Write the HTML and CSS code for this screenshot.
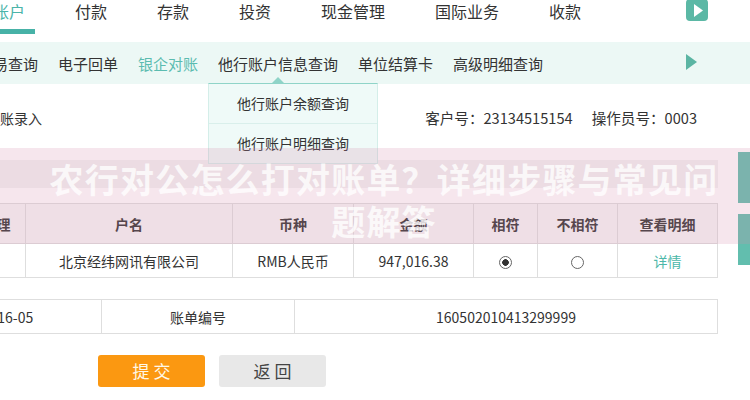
FILE: index.html
```html
<!DOCTYPE html>
<html lang="zh-CN">
<head>
<meta charset="utf-8">
<title>银企对账</title>
<link rel="stylesheet" href="styles.css">
</head>
<body>
<div class="screen">
  <header class="topnav">
    <ul class="main-menu">
      <li class="active">账户</li>
      <li>付款</li>
      <li>存款</li>
      <li>投资</li>
      <li>现金管理</li>
      <li>国际业务</li>
      <li>收款</li>
    </ul>
    <span class="play-btn"><svg width="9" height="13" viewBox="0 0 9 13"><polygon points="0,0 9,6.5 0,13" fill="#fff"/></svg></span>
  </header>

  <nav class="subnav">
    <ul class="sub-menu">
      <li>交易查询</li>
      <li>电子回单</li>
      <li class="current">银企对账</li>
      <li>他行账户信息查询</li>
      <li>单位结算卡</li>
      <li>高级明细查询</li>
    </ul>
    <span class="sub-arrow"></span>
  </nav>

  <div class="dropdown">
    <div class="dd-item">他行账户余额查询</div>
    <div class="dd-item">他行账户明细查询</div>
  </div>

  <section class="info">
    <span class="crumb">对账录入</span>
    <div class="meta-group">
      <span>客户号：23134515154</span>
      <span>操作员号：0003</span>
    </div>
  </section>

  <div class="bar"></div>

  <table class="recon">
    <colgroup>
      <col class="c1"><col class="c2"><col class="c3"><col class="c4"><col class="c5"><col class="c6"><col class="c7">
    </colgroup>
    <thead>
      <tr><th>处理</th><th>户名</th><th>币种</th><th>金额</th><th>相符</th><th>不相符</th><th>查看明细</th></tr>
    </thead>
    <tbody>
      <tr>
        <td></td>
        <td>北京经纬网讯有限公司</td>
        <td>RMB人民币</td>
        <td>947,016.38</td>
        <td><span class="radio checked"></span></td>
        <td><span class="radio"></span></td>
        <td><span class="link">详情</span></td>
      </tr>
    </tbody>
  </table>

  <table class="bill">
    <colgroup><col class="b1"><col class="b2"><col class="b3"></colgroup>
    <tr><td>2016-05</td><td>账单编号</td><td>160502010413299999</td></tr>
  </table>

  <div class="actions">
    <button class="btn submit">提 交</button>
    <button class="btn back">返 回</button>
  </div>

  <div class="side-tabs">
    <span class="tab"></span>
    <span class="tab"></span>
  </div>

  <div class="overlay">
    <h1 class="title">农行对公怎么打对账单？详细步骤与常见问题解答</h1>
  </div>
</div>
</body>
</html>
```
FILE: styles.css
```css
html, body {
  margin: 0;
  padding: 0;
  background: #fff;
}
body {
  width: 750px;
  height: 400px;
  overflow: hidden;
  font-family: "Noto Sans CJK SC", "Noto Sans", sans-serif;
  color: #333;
}
.screen {
  position: relative;
  width: 750px;
  height: 400px;
  overflow: hidden;
}

/* top navigation */
.topnav {
  display: flex;
  align-items: flex-start;
  height: 42px;
  background: #fff;
}
.main-menu {
  display: flex;
  gap: 50px;
  list-style: none;
  margin: 0 0 0 -7px;
  padding: 0;
  font-size: 16px;
  line-height: 22px;
  color: #333;
  white-space: nowrap;
}
.main-menu li.active {
  color: #4bb4a9;
  padding: 0 10px 7px 5px;
  margin: 0 -10px 0 -5px;
  border-bottom: 5px solid #47b2a7;
}
.play-btn {
  margin-left: auto;
  margin-right: 42px;
  margin-top: -1px;
  width: 22px;
  height: 22px;
  border-radius: 4px;
  background: #5bb8a5;
  display: flex;
  align-items: center;
  justify-content: center;
}
.play-btn svg {
  margin-left: 3px;
}

/* sub navigation */
.subnav {
  display: flex;
  align-items: center;
  height: 42px;
  padding-top: 2px;
  box-sizing: border-box;
  background: #ecf8f5;
}
.sub-menu {
  display: flex;
  gap: 20px;
  list-style: none;
  margin: 0 0 0 -22px;
  padding: 0;
  font-size: 15px;
  line-height: 20px;
  color: #333;
  white-space: nowrap;
}
.sub-menu li.current {
  color: #5bbcb0;
}
.sub-arrow {
  margin-left: auto;
  margin-right: 53px;
  margin-top: -4px;
  width: 0;
  height: 0;
  border-left: 11px solid #5bb5a3;
  border-top: 8px solid transparent;
  border-bottom: 8px solid transparent;
}

/* dropdown */
.dropdown {
  position: absolute;
  left: 208px;
  top: 83px;
  width: 170px;
  box-sizing: border-box;
  background: #effaf8;
  border: 1px solid #d4eee9;
  border-top-color: #8fd4c8;
  z-index: 3;
}
.dropdown::before {
  content: "";
  position: absolute;
  left: 63px;
  top: -7px;
  border-left: 6px solid transparent;
  border-right: 6px solid transparent;
  border-bottom: 6px solid #8fd4c8;
}
.dd-item {
  height: 39px;
  line-height: 39px;
  text-align: center;
  font-size: 14px;
  color: #333;
}
.dd-item + .dd-item {
  border-top: 1px solid #d9efeb;
}

/* info row */
.info {
  display: flex;
  align-items: center;
  height: 64px;
  padding-top: 4px;
  box-sizing: border-box;
  font-size: 14px;
  line-height: 20px;
}
.crumb {
  margin-left: -14px;
}
.meta-group {
  display: flex;
  gap: 19px;
  margin-left: auto;
  margin-right: 53px;
  font-size: 14.6px;
}

.bar {
  margin-top: 12px;
  width: 718px;
  height: 28px;
  background: #f2f2f2;
}

/* tables */
table {
  border-collapse: collapse;
  table-layout: fixed;
  font-size: 14px;
  color: #333;
}
td, th {
  border: 1px solid #dedede;
  padding: 0;
  text-align: center;
  white-space: nowrap;
  overflow: hidden;
}
.recon {
  margin-top: 15px;
  margin-left: -33px;
  width: 750px;
}
.recon .c1 { width: 58px; }
.recon .c2 { width: 207px; }
.recon .c3 { width: 121px; }
.recon .c4 { width: 120px; }
.recon .c5 { width: 64px; }
.recon .c6 { width: 80px; }
.recon .c7 { width: 100px; }
.recon th {
  height: 39px;
  background: #f6f6f6;
  font-weight: 700;
  font-size: 14px;
}
.recon td {
  height: 33px;
  background: #fff;
}
.radio {
  display: inline-block;
  width: 13px;
  height: 13px;
  box-sizing: border-box;
  border: 1px solid #666;
  border-radius: 50%;
  vertical-align: middle;
  background: #fff;
}
.radio.checked {
  background: radial-gradient(circle, #333 0 3px, #fff 3.6px);
}
.link {
  color: #4cb8a9;
}

.bill {
  margin-top: 21px;
  margin-left: -87px;
  width: 804px;
}
.bill .b1 { width: 188px; }
.bill .b2 { width: 193px; }
.bill .b3 { width: 423px; }
.bill td {
  height: 33px;
}

/* buttons */
.actions {
  display: flex;
  gap: 14px;
  margin-top: 21px;
  padding-left: 98px;
}
.btn {
  width: 107px;
  height: 32px;
  border: 0;
  border-radius: 3px;
  font-family: "Noto Sans CJK SC", sans-serif;
  font-size: 17px;
  line-height: 32px;
  padding: 0;
}
.submit {
  background: #fb9811;
  color: #fff8e8;
}
.back {
  background: #e8e8e8;
  color: #444;
}

/* side tabs */
.side-tabs {
  position: absolute;
  right: 0;
  top: 152px;
  width: 12px;
  display: flex;
  flex-direction: column;
  gap: 11px;
  z-index: 2;
}
.tab {
  display: block;
  height: 51px;
  background: #62beae;
}

/* overlay title band */
.overlay {
  position: absolute;
  left: 0;
  top: 148px;
  width: 750px;
  height: 96px;
  background: rgba(214, 140, 175, 0.22);
  z-index: 5;
}
.title {
  margin: 0 0 0 42px;
  width: 684px;
  padding-top: 10px;
  font-size: 34px;
  line-height: 42px;
  font-weight: 700;
  letter-spacing: 1.2px;
  text-align: center;
  color: rgba(255, 255, 255, 0.78);
}
```
